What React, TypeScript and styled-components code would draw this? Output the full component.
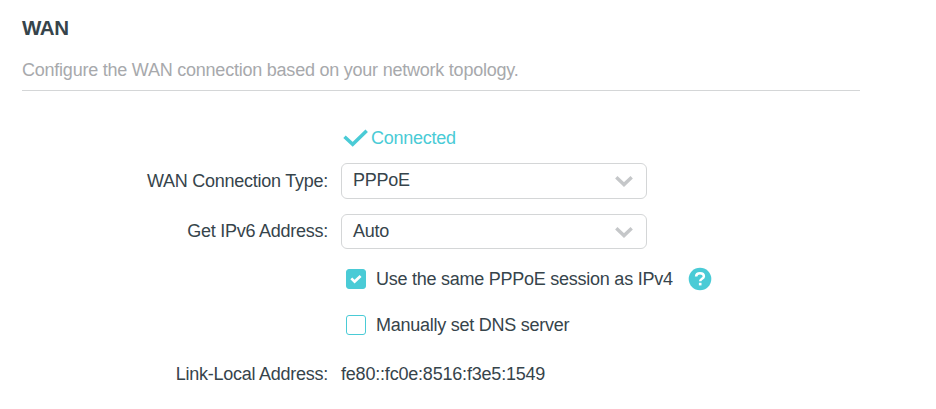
import React from "react";
import styled, { createGlobalStyle } from "styled-components";

const GlobalStyle = createGlobalStyle`
  * { box-sizing: border-box; }
  body {
    margin: 0;
    background: #fff;
    color: #36444b;
    font-family: "Liberation Sans", Arial, sans-serif;
    font-size: 18px;
    line-height: 22px;
    letter-spacing: -0.25px;
  }
`;

const Page = styled.main`
  width: 860px;
  padding: 17px 0 0 22px;
`;

const Header = styled.header`
  height: 74px;
  border-bottom: 1px solid #d4d6d7;
`;

const Title = styled.h1`
  margin: 0;
  font-size: 20.5px;
  line-height: 22px;
  letter-spacing: -0.35px;
`;

const Description = styled.p`
  margin: 20px 0 0;
  color: #a7a9ac;
  letter-spacing: -0.23px;
`;

const Fields = styled.div`
  display: flex;
  flex-direction: column;
`;

const Row = styled.div<{ $gap: number; $height: number }>`
  display: grid;
  grid-template-columns: 306px auto;
  column-gap: 13px;
  margin-top: ${({ $gap }) => $gap}px;
  height: ${({ $height }) => $height}px;
`;

const Status = styled.div`
  grid-column: 2;
  display: flex;
  align-items: center;
  height: 24px;
  padding-left: 2px;
  gap: 3px;
  color: #4acbd6;
`;

const Label = styled.span<{ $top: number }>`
  grid-column: 1;
  justify-self: end;
  margin-top: ${({ $top }) => $top}px;
  white-space: nowrap;
`;

const Select = styled.button<{ $height: number }>`
  width: 306px;
  height: ${({ $height }) => $height}px;
  display: flex;
  align-items: center;
  justify-content: space-between;
  padding: 0 12px 0 11px;
  border: 1px solid #d4d6d7;
  border-radius: 6px;
  background: #fff;
  color: inherit;
  font: inherit;
  letter-spacing: inherit;
`;

const Value = styled.span`
  line-height: 22px;
  padding-bottom: 2px;
`;

const CheckLine = styled.div`
  grid-column: 2;
  display: flex;
  align-items: center;
  padding-left: 5px;
  gap: 10px;
  white-space: nowrap;
`;

const Checkbox = styled.span<{ $checked?: boolean }>`
  width: 20px;
  height: 20px;
  border: 1px solid #4acbd6;
  border-radius: 3px;
  background: ${({ $checked }) => ($checked ? "#4acbd6" : "#fff")};
  display: flex;
  align-items: center;
  justify-content: center;
`;

const Help = styled.span`
  display: flex;
  margin-left: 5px;
`;

const Address = styled.span`
  letter-spacing: -0.2px;
`;

const Chevron = () => (
  <svg width="20" height="14" viewBox="0 0 20 14" fill="none">
    <path d="M2.3 3.3 10 10.6 17.7 3.3" stroke="#c5c7c9" strokeWidth="3.4" />
  </svg>
);

export default function App() {
  return (
    <>
      <GlobalStyle />
      <Page>
        <Header>
          <Title>WAN</Title>
          <Description>Configure the WAN connection based on your network topology.</Description>
        </Header>
        <Fields>
          <Row $gap={35} $height={24}>
            <Status>
              <svg width="25" height="18" viewBox="0 0 25 18" fill="none">
                <path d="M1.5 7.700 9.700 15.300 23.700 1.800" stroke="#4acbd6" strokeWidth="3.500" />
              </svg>
              Connected
            </Status>
          </Row>
          <Row $gap={13} $height={36}>
            <Label $top={7}>WAN Connection Type:</Label>
            <Select $height={36}><Value>PPPoE</Value><Chevron /></Select>
          </Row>
          <Row $gap={15} $height={35}>
            <Label $top={6}>Get IPv6 Address:</Label>
            <Select $height={35}><Value>Auto</Value><Chevron /></Select>
          </Row>
          <Row $gap={18} $height={24}>
            <CheckLine>
              <Checkbox $checked>
                <svg width="12" height="10" viewBox="0 0 12 10" fill="none">
                  <path d="M1.300 4.400 4.600 7.600 10.600 2" stroke="#fff" strokeWidth="2.700" />
                </svg>
              </Checkbox>
              Use the same PPPoE session as IPv4
              <Help>
                <svg width="24" height="24" viewBox="0 0 24 24" fill="none">
                  <circle cx="12" cy="12" r="11.3" fill="#4acbd6" />
                  <path d="M8.100 9.500C8.200 7.300 9.800 6.200 12 6.200c2.200 0 3.900 1.100 3.900 3.100 0 2.600-3.700 2.400-3.700 5" stroke="#fff" strokeWidth="2.500" />
                  <rect x="10.900" y="15.800" width="2.600" height="2.600" fill="#fff" />
                </svg>
              </Help>
            </CheckLine>
          </Row>
          <Row $gap={22} $height={24}>
            <CheckLine>
              <Checkbox />
              Manually set DNS server
            </CheckLine>
          </Row>
          <Row $gap={26} $height={22}>
            <Label $top={0}>Link-Local Address:</Label>
            <Address>fe80::fc0e:8516:f3e5:1549</Address>
          </Row>
        </Fields>
      </Page>
    </>
  );
}
